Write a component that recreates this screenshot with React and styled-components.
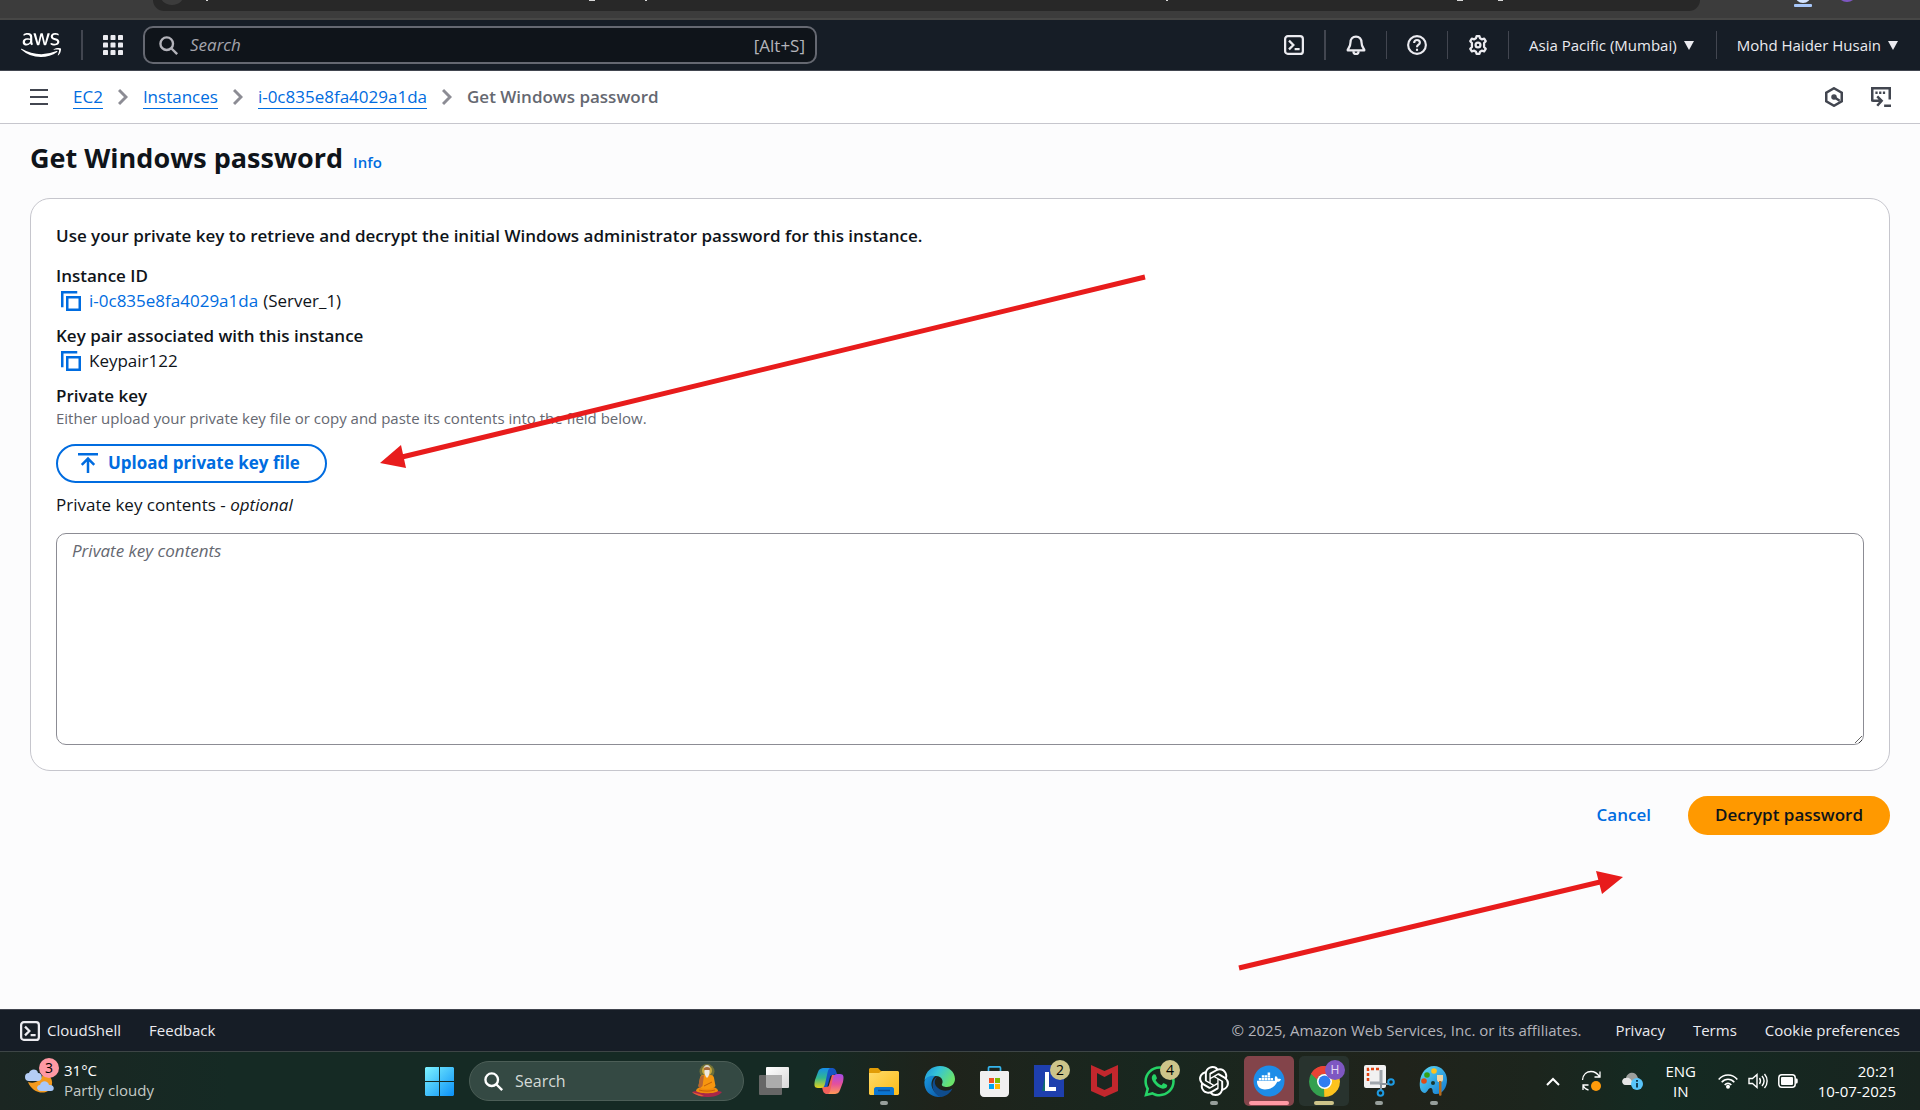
import React from 'react';
import styled, { createGlobalStyle } from 'styled-components';
import { FaAws, FaDocker, FaWhatsapp } from 'react-icons/fa';
import { SiOpenai } from 'react-icons/si';

const Global = createGlobalStyle`
  *, *::before, *::after { box-sizing: border-box; }
  body { margin: 0; background: #fcfcfd; font-family: "Open Sans", "Noto Sans", sans-serif; font-size: 17px; line-height: 25px; color: #0f141a; }
  button, input, textarea { font: inherit; color: inherit; }
  button { background: none; border: 0; padding: 0; cursor: pointer; }
  h1, h2, p { margin: 0; }
  svg { display: block; flex: none; }
`;

const Page = styled.div`
  min-height: 100vh;
  display: flex;
  flex-direction: column;
  position: relative;
`;

/* Browser toolbar edge */
const BrowserStrip = styled.div`
  height: 20px;
  display: flex;
  align-items: flex-start;
  background: #3c3c3c;
  border-bottom: 2px solid #474746;
`;
const AddressBar = styled.div`
  flex: 1;
  height: 11px;
  margin-left: 153px;
  background: #282828;
  border-radius: 0 0 18px 18px;
  overflow: hidden;
`;
const BrowserActions = styled.div`
  width: 220px;
  padding-left: 72px;
`;

/* Console header */
const Header = styled.header`
  height: 51px;
  display: flex;
  align-items: center;
  background: #161d26;
  border-bottom: 1px solid #424650;
  color: #ebebf0;
`;
const Logo = styled.a`
  display: flex;
  padding: 0 20px 0 21px;
  color: #fff;
`;
const Rule = styled.span`
  width: ${(p) => (p.$thick ? 2 : 1)}px;
  height: ${(p) => (p.$thick ? 30 : 28)}px;
  background: #424650;
`;
const IconButton = styled.button`
  display: flex;
  align-items: center;
  padding: 0 20px;
  color: ${(p) => p.$tone || '#ebebf0'};
`;
const SearchBox = styled.label`
  width: 674px;
  height: 38px;
  display: flex;
  align-items: center;
  gap: 12px;
  padding: 0 10px 0 14px;
  border: 2px solid #656871;
  border-radius: 10px;
  background: #0f141a;
  color: #b4b4bb;
`;
const SearchInput = styled.input`
  flex: 1;
  min-width: 0;
  padding: 0 0 2px;
  border: 0;
  outline: 0;
  background: none;
  &::placeholder { color: #a4a4ad; font-style: italic; opacity: 1; }
`;
const HeaderTools = styled.nav`
  margin-left: auto;
  display: flex;
  align-items: center;
`;
const MenuButton = styled.button`
  display: flex;
  align-items: center;
  gap: 7px;
  padding: 0 22px 0 20px;
  font-size: 15px;
  font-weight: 500;
  color: #ebebf0;
`;

/* Breadcrumbs */
const CrumbBar = styled.div`
  height: 53px;
  display: flex;
  align-items: center;
  padding: 0 29px 0 30px;
  background: #fff;
  border-bottom: 1px solid #c6c6cd;
  color: #424650;
`;
const PlainButton = styled.button`
  display: flex;
  color: #424650;
`;
const Crumbs = styled.nav`
  flex: 1;
  display: flex;
  align-items: center;
  gap: 15px;
  margin-left: 25px;
  line-height: 22px;
  color: #8c8c94;
`;
const CrumbLink = styled.a`
  color: #006ce0;
  text-decoration: none;
  border-bottom: 1px solid #006ce0;
`;
const CrumbCurrent = styled.span`
  padding-bottom: 1px;
  font-weight: 600;
  color: #656871;
`;
const CrumbTools = styled.div`
  display: flex;
  gap: 27px;
`;

/* Main content */
const Main = styled.main`
  flex: 1;
  padding: 16px 30px 0;
`;
const TitleRow = styled.div`
  display: flex;
  align-items: baseline;
  gap: 10px;
  height: 58px;
`;
const Title = styled.h1`
  font-size: 27px;
  line-height: 36px;
  font-weight: 700;
`;
const InfoLink = styled.a`
  font-size: 15px;
  font-weight: 600;
  color: #006ce0;
  text-decoration: none;
`;
const Card = styled.section`
  padding: 24px 25px 25px;
  background: #fff;
  border: 1px solid #c6c6cd;
  border-radius: 20px;
`;
const Field = styled.div`
  margin-top: ${(p) => p.$space || 10}px;
`;
const Strong = styled.h2`
  font-size: 17px;
  line-height: 25px;
  font-weight: 600;
`;
const Value = styled.div`
  display: flex;
  align-items: center;
  gap: 5px;
  padding-left: 5px;
`;
const CopyButton = styled.button`
  display: flex;
  margin-right: 3px;
  color: #006ce0;
`;
const ValueLink = styled.a`
  color: #006ce0;
  text-decoration: none;
`;
const Hint = styled.p`
  font-size: 15px;
  line-height: 20px;
  color: #656871;
`;
const Button = styled.button`
  height: 39px;
  display: inline-flex;
  align-items: center;
  gap: 10px;
  padding: 0 25px 2px;
  border: 2px solid ${(p) => (p.$kind === 'outline' ? '#006ce0' : 'transparent')};
  border-radius: 20px;
  font-weight: 600;
  color: ${(p) => (p.$kind === 'primary' ? '#0f141a' : '#006ce0')};
  ${(p) => p.$kind === 'primary' && 'background: #ff9900; border-color: #ff9900;'}
  ${(p) => p.$kind === 'outline' && 'margin-top: 16px; padding: 0 25px 2px 20px; font-weight: 700;'}
`;
const Label = styled.label`
  display: block;
  margin: 9px 0 16px;
`;
const KeyArea = styled.textarea`
  display: block;
  width: 100%;
  height: 212px;
  padding: 4px 15px;
  border: 1px solid #8c8c94;
  border-radius: 10px;
  background: #fff;
  resize: both;
  &::placeholder { color: #656871; font-style: italic; opacity: 1; }
`;
const Actions = styled.div`
  display: flex;
  justify-content: flex-end;
  gap: 10px;
  margin-top: 25px;
`;

/* Footer */
const Footer = styled.footer`
  height: 42px;
  display: flex;
  align-items: center;
  gap: 28px;
  padding: 0 20px;
  border-top: 1px solid #424650;
  background: #161d26;
  font-size: 15px;
  color: #ebebf0;
`;
const FooterLink = styled.a`
  color: inherit;
  text-decoration: none;
`;
const ShellButton = styled.button`
  display: flex;
  align-items: center;
  gap: 7px;
`;
const Copyright = styled.span`
  margin: 0 6px 0 auto;
  color: #b4b4bb;
`;

/* Desktop taskbar */
const Taskbar = styled.div`
  height: 59px;
  display: grid;
  grid-template-columns: 1fr auto 461px;
  align-items: center;
  border-top: 1px solid #3d4546;
  background: linear-gradient(90deg, #1b2622 0%, #152a24 12%, #152a24 42%, #1f231b 49%, #18271f 60%, #20231b 73%, #1c251d 80%, #142a22 86%, #18241f 100%);
  font-size: 15px;
  line-height: 20px;
  color: #fff;
`;
const Weather = styled.button`
  justify-self: start;
  display: flex;
  align-items: center;
  gap: 4px;
  padding: 0 0 2px 24px;
  text-align: left;
  color: #fff;
`;
const Muted = styled.div`
  color: #c3c9c6;
`;
const Apps = styled.div`
  display: flex;
  align-items: center;
  gap: 5px;
`;
const Tile = styled.button`
  position: relative;
  width: 50px;
  height: 50px;
  display: flex;
  align-items: center;
  justify-content: center;
  border-radius: 5px;
  background: ${(p) => p.$bg || 'none'};
  &::after {
    content: '';
    position: absolute;
    left: calc(50% - ${(p) => (p.$bar || 0) / 2}px);
    bottom: 1px;
    width: ${(p) => p.$bar || 0}px;
    height: 4px;
    border-radius: 2px;
    background: ${(p) => p.$barTone || '#979f9b'};
  }
`;
const Badge = styled.span`
  position: absolute;
  top: ${(p) => p.$top || 4}px;
  right: ${(p) => p.$right || 4}px;
  width: 20px;
  height: 20px;
  border-radius: 50%;
  background: ${(p) => p.$bg || '#cdc48a'};
  color: ${(p) => p.$fg || '#000'};
  font-size: ${(p) => p.$size || 14}px;
  line-height: 20px;
  text-align: center;
`;
const TaskSearch = styled.label`
  width: 275px;
  height: 40px;
  display: flex;
  align-items: center;
  gap: 12px;
  padding: 0 21px 0 14px;
  border: 1px solid #4c5e57;
  border-radius: 20px;
  background: #344943;
`;
const TaskInput = styled.input`
  flex: 1;
  min-width: 0;
  padding: 0;
  border: 0;
  outline: 0;
  background: none;
  font-size: 16px;
  &::placeholder { color: #d3dad7; opacity: 1; }
`;
const Tray = styled.div`
  display: flex;
  align-items: center;
  justify-content: flex-end;
  padding-right: 24px;
`;
const TrayGroup = styled.div`
  display: flex;
  align-items: center;
  gap: ${(p) => p.$gap}px;
  margin-right: 20px;
`;
const Language = styled.div`
  width: 36px;
  margin-right: 19px;
  text-align: center;
`;
const Clock = styled.div`
  text-align: right;
`;
const WeatherIcon = styled.span`
  position: relative;
  width: 36px;
  height: 40px;
  display: flex;
  align-items: center;
`;

const Annotations = styled.svg`
  position: absolute;
  top: 0;
  left: 0;
  pointer-events: none;
`;

const Icon = ({ size = 20, children, sw = 2, box = 16 }) => (
  <svg width={size} height={size} viewBox={`0 0 ${box} ${box}`} fill="none" stroke="currentColor" strokeWidth={sw} aria-hidden="true">
    {children}
  </svg>
);

const SearchIcon = ({ sw = 2 }) => (
  <Icon size={19} sw={sw}><circle cx="6.5" cy="6.5" r="5.3" /><path d="M10.3 10.3l5 5" /></Icon>
);
const ShellIcon = () => (
  <Icon sw={1.8}><rect x=".9" y=".9" width="14.2" height="14.2" rx="2.2" /><path d="M4 4.5L7.5 8 4 11.500M8.500 11.300h4" /></Icon>
);
const GridIcon = () => (
  <Icon>
    <g fill="currentColor" stroke="none">
      {[0, 6, 12].map((y) => [0, 6, 12].map((x) => <rect key={`${x}${y}`} x={x} y={y} width="4" height="4" rx=".7" />))}
    </g>
  </Icon>
);
const BellIcon = () => (
  <Icon sw={1.8}>
    <path d="M8 1.200c-2.800 0-4.400 2-4.400 4.600 0 3.200-.9 4-2.200 5.900v.6h13.200v-.6c-1.300-1.900-2.200-2.700-2.200-5.900C12.400 3.200 10.800 1.200 8 1.200z" strokeLinejoin="round" />
    <path d="M5.800 13c.2 1.500 1.100 2.300 2.200 2.300s2-.8 2.200-2.300" />
  </Icon>
);
const HelpIcon = () => (
  <Icon sw={1.7}><circle cx="8" cy="8" r="7.100" /><path d="M5.700 6.300c0-1.500 1-2.300 2.300-2.300s2.300.8 2.300 2.100c0 1.600-2.300 1.700-2.300 3.600" /><path d="M8 11v1.700" /></Icon>
);
const GearIcon = () => (
  <Icon box={24}>
    <g strokeWidth="2.700" strokeLinejoin="round">
      <path d="M9.500 4l.8-2.600h3.400l.8 2.600 2 1.200 2.900-.8 1.900 3-2 2.100v5l2 2.100-1.900 3-2.900-.8-2 1.200-.8 2.600h-3.400L9.500 20l-2-1.200-2.900.8-1.900-3 2-2.100v-5l-2-2.100 1.900-3 2.900.8z" />
      <circle cx="12" cy="12" r="2.900" />
    </g>
  </Icon>
);
const Caret = () => (
  <svg width="10" height="9" viewBox="0 0 10 9" aria-hidden="true"><path d="M0 0h10L5 9z" fill="currentColor" /></svg>
);
const Chevron = () => (
  <svg width="10" height="18" viewBox="0 0 10 18" fill="none" stroke="currentColor" strokeWidth="3" aria-hidden="true"><path d="M1 2l7 7-7 7" /></svg>
);
const CopyIcon = () => (
  <Icon><path d="M1 13V1h12" /><rect x="5" y="5" width="10" height="10" /></Icon>
);
const UploadIcon = () => (
  <Icon size={20}><path d="M0 1h16M8 16V5M3 9.500L8 4.500l5 5" /></Icon>
);

const Windows = () => (
  <svg width="29" height="29" viewBox="0 0 29 29">
    <defs><linearGradient id="win" gradientUnits="userSpaceOnUse" x1="0" y1="0" x2="29" y2="29"><stop stopColor="#7df3ff" /><stop offset="1" stopColor="#0a90f7" /></linearGradient></defs>
    <path fill="url(#win)" d="M1 0h13v14H0V1zM15 0h13l1 1v13H15zM0 15h14v14H1l-1-1zM15 15h14v13l-1 1H15z" />
  </svg>
);
const Guru = () => (
  <svg width="30" height="34" viewBox="0 0 30 34">
    <circle cx="15" cy="7.500" r="7.500" fill="#6f7038" />
    <circle cx="15" cy="6.500" r="5" fill="#c9a93c" />
    <path d="M0 28c4-2.500 26-2.500 30 0-3 4-9 5-15 5S4 31 0 28z" fill="#a82749" />
    <path d="M0 28c4 1.500 9 2 12 4l-3 .3C5 31.500 2 30 0 28z" fill="#e55b38" />
    <path d="M4 27c0-2.500 3-3.500 6-4h10c3 .5 6 1.500 6 4-3 3-19 3-22 0z" fill="#f18a0c" />
    <path d="M8 14c0-2.500 3-3.500 7-3.500s7 1 7 3.500l1.500 8c-1 2-4 3-8.500 3s-7.500-1-8.500-3z" fill="#f7960f" />
    <path d="M8 13.500c1.500-1.500 2.500-2 4-2.200L10.500 22 8 24c-1.500-.5-1.800-1.500-1.500-2.500z" fill="#b96633" />
    <circle cx="15" cy="5" r="3" fill="#a96a3b" />
    <path d="M12.500 6h5c.5 3-.5 6.500-2.500 8-2-1.500-3-5-2.500-8z" fill="#eee9df" />
    <path d="M12 4c0-4 6-4 6 0-2-1.500-4-1.500-6 0z" fill="#d9d5cc" />
    <path d="M7 26c5 1.500 11 1.500 16 0M12 22l8-4" stroke="#c76006" fill="none" />
  </svg>
);
const TaskView = () => (
  <svg width="30" height="28" viewBox="0 0 30 28">
    <defs><linearGradient id="tv" x1="0" y1="0" x2="1" y2="1"><stop stopColor="#fff" /><stop offset="1" stopColor="#d8d8d8" /></linearGradient></defs>
    <rect x="7" width="23" height="21" rx="1" fill="url(#tv)" />
    <rect y="8" width="23" height="20" rx="1" fill="#666" />
    <path d="M7 8h16v13H8l-1-1z" fill="#acacac" />
  </svg>
);
const Copilot = () => (
  <svg width="30" height="28" viewBox="0 0 30 28">
    <defs>
      <linearGradient id="cpa" x1="0" y1="0" x2="0" y2="1"><stop stopColor="#168eea" /><stop offset=".5" stopColor="#32b78e" /><stop offset="1" stopColor="#e8d018" /></linearGradient>
      <linearGradient id="cpb" x1="0" y1="0" x2="0" y2="1"><stop stopColor="#a44bea" /><stop offset=".5" stopColor="#e4509c" /><stop offset="1" stopColor="#ff9a56" /></linearGradient>
    </defs>
    <path d="M7 4c1-3 2-3 4-3h7c3 0 4 2 5 6l-4 1c-2 0-3 1-3 2l-3 11H9L7 12z" fill="#1555c4" />
    <path d="M23 24c-1 3-2 3-4 3h-6c-3 0-4-2-5-7h4c2 0 3-1 3-2l3-10h4l3 8z" fill="#f1605b" />
    <path d="M10 1h6c-2 1-2 3-3 7l-2 9c-1 3-2 4-4 4H4c-4 0-4-3-3-8L4 5c1-3 3-4 6-4z" fill="url(#cpa)" />
    <path d="M20 27h-6c2-1 2-3 3-7l2-9c1-3 2-4 4-4h3c4 0 4 3 3 8l-3 8c-1 3-3 4-6 4z" fill="url(#cpb)" />
  </svg>
);
const Folder = () => (
  <svg width="30" height="27" viewBox="0 0 30 27">
    <defs><linearGradient id="fd" x1="0" y1="0" x2="1" y2="1"><stop stopColor="#ffdb69" /><stop offset="1" stopColor="#fdbb17" /></linearGradient></defs>
    <path d="M1 0h8l3 3h15v8H0V1z" fill="#e19c06" />
    <path d="M0 5h10l3-2h16l1 1v22l-1 1H1l-1-1z" fill="url(#fd)" />
    <path d="M5 27v-6c0-1 1-2 2-2h16c1 0 2 1 2 2v6z" fill="#0b75d1" />
    <path d="M9 22.500h12" stroke="#0a4e96" strokeWidth="1.500" />
  </svg>
);
const Edge = () => (
  <svg width="31" height="31" viewBox="0 0 31 31">
    <defs>
      <linearGradient id="ed" x1="0" y1="0" x2="1" y2=".5"><stop stopColor="#1d8fdc" /><stop offset=".45" stopColor="#34c3d8" /><stop offset="1" stopColor="#6be36b" /></linearGradient>
      <linearGradient id="ee" x1="0" y1="0" x2="1" y2="1"><stop stopColor="#1998de" /><stop offset="1" stopColor="#0b55a6" /></linearGradient>
    </defs>
    <path d="M.500 14C1.500 5 8 0 16 0c8.500 0 15 6 15 13 0 5-4 8-8 8-3 0-6-1-5-3 1.500-2 .5-8-6-8-5 0-9 2-11.500 4z" fill="url(#ed)" />
    <path d="M.400 16C1 11 6 9 11 10c-4 4-5 10-1 15 2 3 5 5 8 6C8 32 0 26 .4 16z" fill="url(#ee)" />
    <path d="M13 11c-3 3-3 8 1 11 4 3.500 10 3.500 14.500.5-2 4-6 7.500-11 8.500-5-1-9-6-9-12 0-4 2-7 4.500-8z" fill="#0f4c8d" />
  </svg>
);
const Store = () => (
  <svg width="29" height="31" viewBox="0 0 29 31">
    <path d="M8.500 6V2c0-.8.500-1.200 1.200-1.200h9.600c.7 0 1.200.4 1.200 1.200v4" fill="none" stroke="#35b4ec" strokeWidth="1.700" />
    <path d="M1 5h27l1 1v21c0 2-1.500 4-4 4H4c-2.500 0-4-2-4-4V6z" fill="#f0f0f0" />
    <path d="M9 12h5v5H9z" fill="#f25022" /><path d="M15 12h5v5h-5z" fill="#7fba00" />
    <path d="M9 18h5v5H9z" fill="#00a4ef" /><path d="M15 18h5v5h-5z" fill="#ffb900" />
  </svg>
);
const Lapp = () => (
  <svg width="30" height="32" viewBox="0 0 30 32">
    <path d="M0 0h30v32H0z" fill="#1e3fae" /><path d="M8 26l3-15v15z" fill="#0f6b6e" /><path d="M11 7h4v15h7v4H11z" fill="#fff" />
  </svg>
);
const McAfee = () => (
  <svg width="27" height="32" viewBox="0 0 27 32">
    <path d="M0 0l13.500 6L27 0v26l-13.500 6L0 26z" fill="#c2272d" />
    <path d="M6 8l7.500 4L21 8v13.500L13.500 25 6 21.500z" fill="#1b2620" />
  </svg>
);
const Docker = () => (
  <svg width="32" height="32" viewBox="0 0 32 32">
    <circle cx="16" cy="16" r="15.500" fill="#1d8ce8" />
    <g color="#fff"><FaDocker x="4" y="4" size={24} /></g>
  </svg>
);
const Chrome = () => (
  <svg width="31" height="31" viewBox="0 0 31 31">
    <path d="M15.500 15.500L2.100 7.750A15.500 15.500 0 0 1 28.900 7.750z" fill="#ea4335" />
    <path d="M15.500 15.500V31A15.500 15.500 0 0 1 2.100 7.750z" fill="#34a04f" />
    <path d="M15.500 15.500L28.900 7.750A15.500 15.500 0 0 1 15.500 31z" fill="#fcc31e" />
    <path d="M15.500 8h13.500l-6.800 11.500z" fill="#fcc31e" /><path d="M2.100 7.750L9 19.500l6-12z" fill="#34a04f" /><path d="M2.100 7.750C5 2.500 10 0 15.500 0c5.500 0 10.500 3 13.400 8H15.500c-4 0-6.500 2-7.500 5.500z" fill="#ea4335" />
    <path d="M22 19.500L15.500 31 15 22z" fill="#fcc31e" />
    <circle cx="15.500" cy="15.500" r="7.500" fill="#fff" /><circle cx="15.500" cy="15.500" r="5.900" fill="#2f7df0" />
  </svg>
);
const Snip = () => (
  <svg width="31" height="32" viewBox="0 0 31 32">
    <rect width="22" height="23" rx="2" fill="#f1f1f1" />
    <path d="M4 16V4h13" fill="none" stroke="#e0400f" strokeWidth="2.500" strokeDasharray="3 2" />
    <path d="M17 5v15M6 18h12" stroke="#a0a6ac" strokeWidth="3" />
    <path d="M17 19h8M17 18v8" stroke="#8b939b" strokeWidth="2" fill="none" />
    <circle cx="27" cy="17" r="2.800" fill="none" stroke="#1e9be3" strokeWidth="2" /><circle cx="16.500" cy="28" r="2.800" fill="none" stroke="#1e9be3" strokeWidth="2" />
  </svg>
);
const Paint = () => (
  <svg width="30" height="32" viewBox="0 0 30 32">
    <defs><linearGradient id="pt" x1="0" y1="0" x2="1" y2="1"><stop stopColor="#5fdcf7" /><stop offset="1" stopColor="#1179d0" /></linearGradient></defs>
    <path d="M15 1c8 0 13 7 13 14 0 8-5 15-12 14-4-1-1-5-4-6-3-.5-3 4-6 5-4 0-6-5-5-12C2 8 7 1 15 1z" fill="url(#pt)" />
    <circle cx="15" cy="6" r="2.800" fill="#ffc21c" /><circle cx="8" cy="10" r="2.800" fill="#35a113" /><circle cx="5" cy="16" r="2.800" fill="#e04b16" /><circle cx="14" cy="18" r="2" fill="#17372f" />
    <path d="M18 10h6v5l-1 2h-4l-1-2z" fill="#efd5a6" /><path d="M20 16h2.500v14c0 1-2.500 1-2.500 0z" fill="#b56a1c" />
  </svg>
);

const Annotation = () => (
  <Annotations width="1700" height="1000" viewBox="0 0 1700 1000" aria-hidden="true">
    <g stroke="#e81c1c" strokeWidth="5" fill="#e81c1c">
      <path d="M1145 277L402 457M1239 968L1600 882" />
      <path stroke="none" d="M380 463l21-18 5 23zM1623 877l-27-6 6 23z" />
    </g>
  </Annotations>
);

export default function App() {
  return (
    <Page>
      <Global />
      <BrowserStrip>
        <AddressBar>
          <svg width="1400" height="11" viewBox="0 0 1400 11" aria-hidden="true">
            <circle cx="19" cy="-8" r="13" fill="#3c3c3c" />
            <path d="M53 0h2v1h-2zM436 0h6v1h-6zM492 0h2v1h-2zM1013 0h2v1h-2zM1304 0h6v1h-6zM1345 0h5v1h-5z" fill="#d8d8d8" />
          </svg>
        </AddressBar>
        <BrowserActions>
          <svg width="90" height="10" viewBox="0 0 90 10" aria-hidden="true">
            <circle cx="31" cy="-5" r="8" fill="#d3e3fd" /><rect x="22" y="4" width="18" height="3" rx="1" fill="#a8c7fa" />
            <circle cx="75" cy="-8" r="10" fill="#7e57c2" />
          </svg>
        </BrowserActions>
      </BrowserStrip>

      <Header>
        <Logo href="#" aria-label="AWS home"><FaAws size={40} /></Logo>
        <Rule $thick />
        <IconButton aria-label="Services"><GridIcon /></IconButton>
        <SearchBox>
          <SearchIcon />
          <SearchInput type="text" placeholder="Search" aria-label="Search services" />
          <span>[Alt+S]</span>
        </SearchBox>
        <HeaderTools>
          <IconButton aria-label="CloudShell"><ShellIcon /></IconButton>
          <Rule $thick />
          <IconButton aria-label="Notifications"><BellIcon /></IconButton>
          <Rule />
          <IconButton aria-label="Help"><HelpIcon /></IconButton>
          <Rule />
          <IconButton aria-label="Settings"><GearIcon /></IconButton>
          <Rule />
          <MenuButton>Asia Pacific (Mumbai)<Caret /></MenuButton>
          <Rule />
          <MenuButton>Mohd Haider Husain<Caret /></MenuButton>
        </HeaderTools>
      </Header>

      <CrumbBar>
        <PlainButton aria-label="Open navigation">
          <svg width="18" height="16" viewBox="0 0 18 16" aria-hidden="true"><path d="M0 1h18M0 8h18M0 15h18" stroke="currentColor" strokeWidth="2" /></svg>
        </PlainButton>
        <Crumbs aria-label="Breadcrumbs">
          <CrumbLink href="#">EC2</CrumbLink><Chevron />
          <CrumbLink href="#">Instances</CrumbLink><Chevron />
          <CrumbLink href="#">i-0c835e8fa4029a1da</CrumbLink><Chevron />
          <CrumbCurrent>Get Windows password</CrumbCurrent>
        </Crumbs>
        <CrumbTools>
          <PlainButton aria-label="Resource settings">
            <Icon><path d="M8 1l6.200 3.500v7L8 15l-6.200-3.500v-7z" /><circle cx="8" cy="8" r="1.700" fill="currentColor" strokeWidth="1" /><path d="M8 8l4.500 3" /></Icon>
          </PlainButton>
          <PlainButton aria-label="Open terminal">
            <Icon><path d="M1 11.500V1h14v9M1 11h6M5 7.500L8.500 11 5 15M10.500 15H16" /><path d="M3.500 4.500h9" strokeDasharray="1.800 1.200" /></Icon>
          </PlainButton>
        </CrumbTools>
      </CrumbBar>

      <Main>
        <TitleRow>
          <Title>Get Windows password</Title>
          <InfoLink href="#">Info</InfoLink>
        </TitleRow>
        <Card>
          <Strong>Use your private key to retrieve and decrypt the initial Windows administrator password for this instance.</Strong>
          <Field $space={15}>
            <Strong>Instance ID</Strong>
            <Value>
              <CopyButton aria-label="Copy instance ID"><CopyIcon /></CopyButton>
              <ValueLink href="#">i-0c835e8fa4029a1da</ValueLink>
              <span>(Server_1)</span>
            </Value>
          </Field>
          <Field>
            <Strong>Key pair associated with this instance</Strong>
            <Value>
              <CopyButton aria-label="Copy key pair name"><CopyIcon /></CopyButton>
              <span>Keypair122</span>
            </Value>
          </Field>
          <Field>
            <Strong>Private key</Strong>
            <Hint>Either upload your private key file or copy and paste its contents into the field below.</Hint>
            <Button $kind="outline"><UploadIcon />Upload private key file</Button>
          </Field>
          <Label htmlFor="key-contents">Private key contents - <em>optional</em></Label>
          <KeyArea id="key-contents" placeholder="Private key contents" />
        </Card>
        <Actions>
          <Button>Cancel</Button>
          <Button $kind="primary">Decrypt password</Button>
        </Actions>
      </Main>

      <Footer>
        <ShellButton><ShellIcon />CloudShell</ShellButton>
        <FooterLink href="#">Feedback</FooterLink>
        <Copyright>© 2025, Amazon Web Services, Inc. or its affiliates.</Copyright>
        <FooterLink href="#">Privacy</FooterLink>
        <FooterLink href="#">Terms</FooterLink>
        <FooterLink href="#">Cookie preferences</FooterLink>
      </Footer>

      <Taskbar>
        <Weather>
          <WeatherIcon>
            <svg width="32" height="32" viewBox="0 0 32 32" aria-hidden="true">
              <path d="M4 18c6 2 13 0 16-10 8 3 11 12 5 18S7 27 4 18z" fill="#f39a1e" />
              <path d="M5 17a4 4 0 0 1 0-8c1-4 8-5 9 0 5 0 5 8 0 8z" fill="#b4cdf5" />
              <path d="M17 27c-5 0-5-6-1-6 1-5 8-5 9 0 6-1 6 6 2 6z" fill="#a9c8f8" />
            </svg>
            <Badge $bg="#ff99a4" $top={-2} $right={1}>3</Badge>
          </WeatherIcon>
          <div>31°C<Muted>Partly cloudy</Muted></div>
        </Weather>
        <Apps>
          <Tile aria-label="Start"><Windows /></Tile>
          <TaskSearch>
            <SearchIcon />
            <TaskInput type="text" placeholder="Search" aria-label="Search the desktop" />
            <Guru />
          </TaskSearch>
          <Tile aria-label="Task view"><TaskView /></Tile>
          <Tile aria-label="Copilot"><Copilot /></Tile>
          <Tile aria-label="File Explorer" $bar={8}><Folder /></Tile>
          <Tile aria-label="Edge"><Edge /></Tile>
          <Tile aria-label="Store"><Store /></Tile>
          <Tile aria-label="L app"><Lapp /><Badge>2</Badge></Tile>
          <Tile aria-label="McAfee"><McAfee /></Tile>
          <Tile aria-label="WhatsApp"><FaWhatsapp size={35} color="#25d366" /><Badge>4</Badge></Tile>
          <Tile aria-label="ChatGPT" $bar={8}><SiOpenai size={30} color="#fff" /></Tile>
          <Tile aria-label="Docker" $bg="#83444a" $bar={40} $barTone="#ff99a4"><Docker /></Tile>
          <Tile aria-label="Chrome" $bg="#28332e" $bar={20} $barTone="#cdc48a"><Chrome /><Badge $bg="#7e57c2" $fg="#e6dcf5" $size={12}>H</Badge></Tile>
          <Tile aria-label="Snipping Tool" $bar={8}><Snip /></Tile>
          <Tile aria-label="Paint" $bar={8}><Paint /></Tile>
        </Apps>
        <Tray>
          <TrayGroup $gap={20}>
            <svg width="16" height="20" viewBox="0 0 16 20" aria-hidden="true"><path d="M2 14l6-6 6 6" fill="none" stroke="#fff" strokeWidth="2" /></svg>
            <svg width="21" height="22" viewBox="0 0 21 22" aria-hidden="true">
              <path d="M1.500 10C2 4 6 1.500 10 1.500c4 0 6.500 2 8.500 5M19 1.500V7h-5.500M2 20v-5h5.500M2 15.500c1 2 3 4 5.500 4.500" fill="none" stroke="#fff" strokeWidth="1.300" />
              <circle cx="15" cy="16" r="5" fill="#ff9b0b" />
            </svg>
            <svg width="21" height="18" viewBox="0 0 21 18" aria-hidden="true">
              <path d="M4 13c-5 0-5-7 0-7 1-6 10-8 12 0 4 2 3 7 0 7z" fill="#9b9e9c" /><path d="M4 13c-5 0-5-7 0-7 3-1 6 1 7 7z" fill="#e5e5e5" />
              <circle cx="15" cy="12" r="6" fill="#58c4fa" /><path d="M15 8v1.700M15 11v4.500" stroke="#0d3044" strokeWidth="1.800" />
            </svg>
          </TrayGroup>
          <Language>ENG<br />IN</Language>
          <TrayGroup $gap={10}>
            <svg width="20" height="16" viewBox="0 0 20 16" fill="none" stroke="#fff" strokeWidth="1.600" aria-hidden="true"><path d="M.700 6.500c5-6 13.600-6 18.600 0M3.700 9.300c3.500-4 9.100-4 12.600 0M6.700 12c2-2.200 4.600-2.200 6.600 0" /><circle cx="10" cy="13.800" r="1.200" fill="#fff" /></svg>
            <svg width="20" height="18" viewBox="0 0 20 18" fill="none" stroke="#fff" strokeWidth="1.400" aria-hidden="true"><path d="M1 6.500h3.500L9 2.500v13l-4.500-4H1zM11.500 6c1.300 2 1.300 4 0 6M14 4c2.500 3 2.500 7 0 10M16.500 2c3.500 4 3.500 10 0 14" /></svg>
            <svg width="20" height="14" viewBox="0 0 20 14" aria-hidden="true"><rect x=".8" y=".8" width="16.400" height="12.400" rx="3" fill="none" stroke="#fff" strokeWidth="1.500" /><rect x="3" y="3" width="12" height="8" rx="1" fill="#fff" /><path d="M18 4.500h1c1 0 1 5 0 5h-1z" fill="#fff" /></svg>
          </TrayGroup>
          <Clock>20:21<br />10-07-2025</Clock>
        </Tray>
      </Taskbar>
      <Annotation />
    </Page>
  );
}
